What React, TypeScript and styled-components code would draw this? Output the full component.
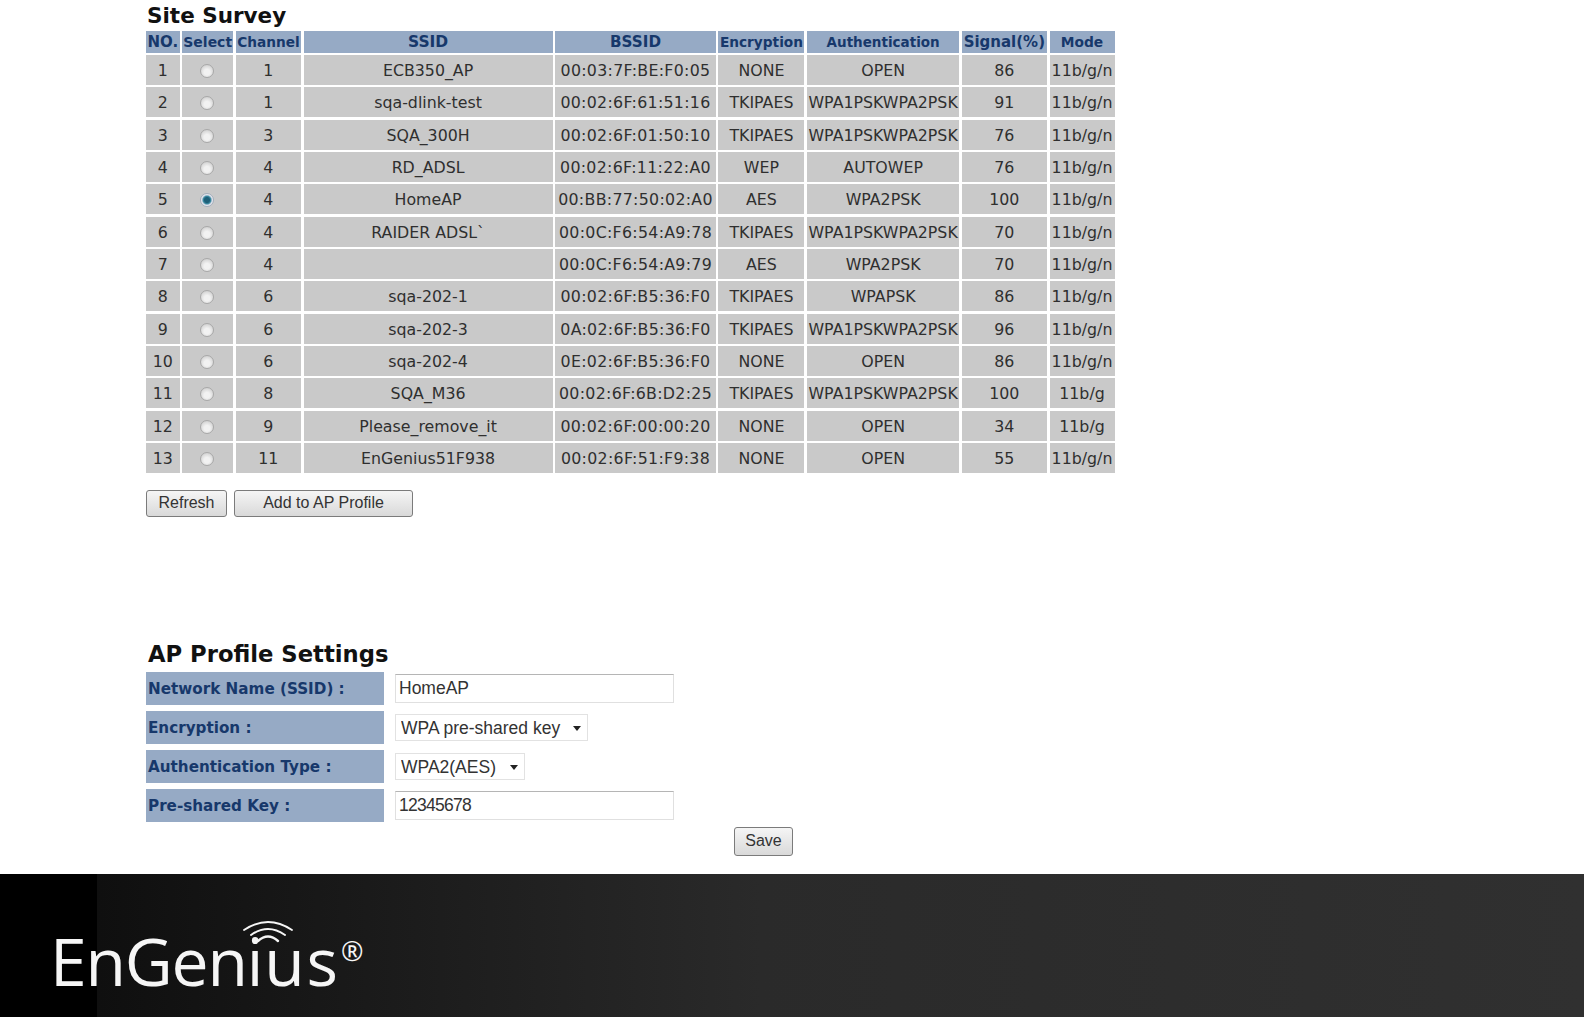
import React from 'react';
import styled, { createGlobalStyle } from 'styled-components';

const Global = createGlobalStyle`
  html, body { margin: 0; padding: 0; background: #fff; }
  body { width: 1584px; height: 1017px; overflow: hidden; }
`;

const Page = styled.div`
  display: flex;
  flex-direction: column;
  height: 1017px;
`;

const Main = styled.main`
  flex: 1;
  padding: 0 0 0 146px;
`;

const Title = styled.h2`
  margin: 0;
  padding-left: 2px;
  font: bold 22.7px/23px "DejaVu Sans", Verdana, sans-serif;
  color: #111;
`;

const SurveyTitle = styled(Title)`
  margin: 4px 0 4px;
  padding-left: 1px;
  font-size: 21.5px;
`;

const ProfileTitle = styled(Title)`
  margin: 0 0 6px;
`;

const Survey = styled.table`
  display: grid;
  grid-template-columns: 33.5px 51px 65px 249px 160.5px 86px 152px 85px 65px;
  grid-template-rows: 21.5px repeat(13, 30px);
  column-gap: 2.7px;
  row-gap: 2.35px;
  width: 969px;
  thead, tbody, tr { display: contents; }
`;

const Head = styled.th<{ $size: number }>`
  display: flex;
  align-items: center;
  justify-content: center;
  background: #96aac5;
  color: #17386b;
  font: bold ${p => p.$size}px "DejaVu Sans", Verdana, sans-serif;
  white-space: nowrap;
  padding: 1px 0 0;
`;

const Cell = styled.td<{ $ls?: number }>`
  display: flex;
  align-items: center;
  justify-content: center;
  background: #c9c9c9;
  color: #2f2f2f;
  font: 15.8px "DejaVu Sans", Verdana, sans-serif;
  letter-spacing: ${p => p.$ls ?? 0}px;
  white-space: nowrap;
  padding: 1px 0 0;
`;

const Radio = styled.input`
  appearance: none;
  width: 14px;
  height: 14px;
  margin: 1px 1px 0 0;
  border-radius: 50%;
  border: 1px solid #a8a8a8;
  background: radial-gradient(circle at 50% 60%, #f2f2f2 0 30%, #cdcdcd 85%);
  &:checked {
    border-color: #a4aebb;
    background: radial-gradient(circle, #1d5f78 0 30%, #3e8ba3 45%, #e6e6ee 62%);
  }
`;

const Actions = styled.div`
  display: flex;
  gap: 7px;
  margin-top: 17px;
`;

const Btn = styled.button<{ $w: number; $h?: number }>`
  width: ${p => p.$w}px;
  height: ${p => p.$h ?? 27}px;
  padding: 0;
  border: 1px solid #7b7b7b;
  border-radius: 3px;
  background: linear-gradient(#f5f5f5, #d9d9d9);
  color: #333;
  font: 16px "Liberation Sans", Arial, sans-serif;
`;

const ProfileSection = styled.section`
  margin-top: 126px;
`;

const Form = styled.div`
  display: grid;
  grid-template-columns: 238px auto;
  column-gap: 11px;
  row-gap: 6px;
  justify-content: start;
`;

const Label = styled.div`
  display: flex;
  align-items: center;
  height: 33px;
  padding: 2px 0 0 2px;
  box-sizing: border-box;
  background: #96aac5;
  color: #17386b;
  font: bold 15.2px "DejaVu Sans", Verdana, sans-serif;
`;

const Control = styled.div`
  display: flex;
  align-items: center;
  padding-top: 1px;
`;

const TextInput = styled.input<{ $ls?: number }>`
  width: 279px;
  height: 29px;
  box-sizing: border-box;
  padding: 0 3px;
  border: 1px solid #e0e0e0;
  border-top-color: #b5b5b5;
  outline: none;
  color: #333;
  font: 17.5px "Liberation Sans", Arial, sans-serif;
  letter-spacing: ${p => p.$ls ?? 0}px;
`;

const SelectWrap = styled.div`
  position: relative;
  &::after {
    content: '';
    position: absolute;
    right: 7px;
    top: 12px;
    border: 4.5px solid transparent;
    border-top: 5px solid #222;
    border-bottom: 0;
    pointer-events: none;
  }
`;

const Select = styled.select<{ $w: number }>`
  appearance: none;
  display: block;
  width: ${p => p.$w}px;
  height: 27px;
  box-sizing: border-box;
  padding: 0 0 0 5px;
  border: 1px solid #e2e2e2;
  border-radius: 0;
  background: #fff;
  color: #333;
  font: 17.5px "Liberation Sans", Arial, sans-serif;
`;

const SaveRow = styled.div`
  margin: 5px 0 0 588px;
`;

const Footer = styled.footer`
  height: 143px;
  flex: none;
  display: flex;
  align-items: flex-start;
  padding: 51px 0 0 50px;
  box-sizing: border-box;
  background: linear-gradient(90deg, #000 0 97px, #0f0f0f 97px, #2a2a2a 48%, #303030);
`;

const Logo = styled.div`
  position: relative;
  color: #f6f6f6;
  font: 400 66px/70px "Open Sans", Lato, sans-serif;
  letter-spacing: -1.2px;
  white-space: nowrap;
  display: flex;
`;

const LogoTail = styled.span`
  margin-left: 2px;
  letter-spacing: 2px;
`;

const Registered = styled.span`
  font: 400 27px/27px "Open Sans", sans-serif;
  letter-spacing: 0;
  margin: 12px 0 0 1px;
`;

const Wifi = styled.svg`
  position: absolute;
  left: 192px;
  top: -5px;
  width: 52px;
  height: 24px;
`;

type Row = [string, string, string, string, string, string, string, string];
const rows: Row[] = [
  ['1', '1', 'ECB350_AP', '00:03:7F:BE:F0:05', 'NONE', 'OPEN', '86', '11b/g/n'],
  ['2', '1', 'sqa-dlink-test', '00:02:6F:61:51:16', 'TKIPAES', 'WPA1PSKWPA2PSK', '91', '11b/g/n'],
  ['3', '3', 'SQA_300H', '00:02:6F:01:50:10', 'TKIPAES', 'WPA1PSKWPA2PSK', '76', '11b/g/n'],
  ['4', '4', 'RD_ADSL', '00:02:6F:11:22:A0', 'WEP', 'AUTOWEP', '76', '11b/g/n'],
  ['5', '4', 'HomeAP', '00:BB:77:50:02:A0', 'AES', 'WPA2PSK', '100', '11b/g/n'],
  ['6', '4', 'RAIDER ADSL`', '00:0C:F6:54:A9:78', 'TKIPAES', 'WPA1PSKWPA2PSK', '70', '11b/g/n'],
  ['7', '4', '', '00:0C:F6:54:A9:79', 'AES', 'WPA2PSK', '70', '11b/g/n'],
  ['8', '6', 'sqa-202-1', '00:02:6F:B5:36:F0', 'TKIPAES', 'WPAPSK', '86', '11b/g/n'],
  ['9', '6', 'sqa-202-3', '0A:02:6F:B5:36:F0', 'TKIPAES', 'WPA1PSKWPA2PSK', '96', '11b/g/n'],
  ['10', '6', 'sqa-202-4', '0E:02:6F:B5:36:F0', 'NONE', 'OPEN', '86', '11b/g/n'],
  ['11', '8', 'SQA_M36', '00:02:6F:6B:D2:25', 'TKIPAES', 'WPA1PSKWPA2PSK', '100', '11b/g'],
  ['12', '9', 'Please_remove_it', '00:02:6F:00:00:20', 'NONE', 'OPEN', '34', '11b/g'],
  ['13', '11', 'EnGenius51F938', '00:02:6F:51:F9:38', 'NONE', 'OPEN', '55', '11b/g/n'],
];
const heads: [string, number][] = [
  ['NO.', 15], ['Select', 14], ['Channel', 13.7], ['SSID', 15.5], ['BSSID', 15.2],
  ['Encryption', 13.7], ['Authentication', 13.5], ['Signal(%)', 15], ['Mode', 13.8],
];

export default function App() {
  return (
    <Page>
      <Global />
      <Main>
        <SurveyTitle>Site Survey</SurveyTitle>
        <Survey>
          <thead>
            <tr>{heads.map(([h, s]) => <Head key={h} $size={s}>{h}</Head>)}</tr>
          </thead>
          <tbody>
            {rows.map(r => (
              <tr key={r[0]}>
                <Cell>{r[0]}</Cell>
                <Cell><Radio type="radio" name="ap" defaultChecked={r[0] === '5'} /></Cell>
                {r.slice(1).map((v, i) => <Cell key={i} $ls={i === 2 ? 0.3 : 0}>{v}</Cell>)}
              </tr>
            ))}
          </tbody>
        </Survey>
        <Actions>
          <Btn $w={81}>Refresh</Btn>
          <Btn $w={179}>Add to AP Profile</Btn>
        </Actions>
        <ProfileSection>
          <ProfileTitle>AP Profile Settings</ProfileTitle>
          <Form>
            <Label>Network Name (SSID) :</Label>
            <Control><TextInput defaultValue="HomeAP" /></Control>
            <Label>Encryption :</Label>
            <Control>
              <SelectWrap><Select $w={193}><option>WPA pre-shared key</option></Select></SelectWrap>
            </Control>
            <Label>Authentication Type :</Label>
            <Control>
              <SelectWrap><Select $w={130}><option>WPA2(AES)</option></Select></SelectWrap>
            </Control>
            <Label>Pre-shared Key :</Label>
            <Control><TextInput defaultValue="12345678" $ls={-0.75} /></Control>
          </Form>
          <SaveRow><Btn $w={59} $h={29}>Save</Btn></SaveRow>
        </ProfileSection>
      </Main>
      <Footer>
        <Logo>
          EnGeni<LogoTail>us</LogoTail><Registered>®</Registered>
          <Wifi viewBox="0 0 52 24" fill="none" stroke="#f6f6f6" strokeLinecap="round">
            <path d="M2 10 Q26 -6 50 10" strokeWidth="1.8" />
            <path d="M9 15 Q26 3 43 15" strokeWidth="2" />
            <path d="M16 21 Q26 12 36 21" strokeWidth="2.4" />
          </Wifi>
        </Logo>
      </Footer>
    </Page>
  );
}
